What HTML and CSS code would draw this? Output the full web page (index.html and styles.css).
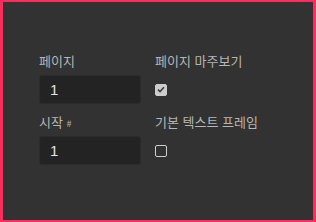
FILE: index.html
```html
<!DOCTYPE html>
<html lang="ko">
<head>
  <meta charset="UTF-8" />
  <title>페이지 설정</title>
  <link rel="stylesheet" href="styles.css">
</head>
<body>
  <div class="painel">
    <div class="grade">
      <div class="campo">
        <label class="rotulo">페이지</label>
        <div class="caixa">1</div>
      </div>
      <div class="campo">
        <label class="rotulo">페이지 마주보기</label>
        <div class="linha-check">
          <span class="check marcado">
            <svg width="8" height="7" viewBox="0 0 8 7"><path d="M1 3.6 L3 5.6 L7 1.2" fill="none" stroke="#3a3a3a" stroke-width="1.5"/></svg>
          </span>
        </div>
      </div>
      <div class="campo">
        <label class="rotulo">시작 <small>#</small></label>
        <div class="caixa">1</div>
      </div>
      <div class="campo">
        <label class="rotulo">기본 텍스트 프레임</label>
        <div class="linha-check">
          <span class="check"></span>
        </div>
      </div>
    </div>
  </div>
</body>
</html>
```

FILE: styles.css
```css
* {
  margin: 0;
  padding: 0;
  box-sizing: border-box;
}

html, body {
  width: 316px;
  height: 222px;
  overflow: hidden;
}

body {
  font-family: "Noto Sans CJK KR", "Noto Sans", sans-serif;
  background: #323232;
}

.painel {
  width: 316px;
  height: 222px;
  border: solid #fc2d5c;
  border-width: 2px 3px;
  background: #323232;
  padding: 51px 0 0 36px;
}

.grade {
  display: grid;
  grid-template-columns: 102px 140px;
  column-gap: 14px;
  row-gap: 10px;
}

.campo {
  display: flex;
  flex-direction: column;
  gap: 6px;
}

.rotulo {
  font-size: 13px;
  line-height: 16px;
  height: 16px;
  color: #b6b6b6;
  white-space: nowrap;
}

.rotulo small {
  font-size: 9px;
}

.caixa {
  height: 29px;
  background: #232323;
  border: 1px solid #2b2b2b;
  border-radius: 3px;
  padding-left: 10px;
  font-family: "Liberation Sans", sans-serif;
  font-size: 15px;
  line-height: 27px;
  color: #e4e4e4;
}

.linha-check {
  height: 29px;
  display: flex;
  align-items: center;
}

.check {
  width: 12px;
  height: 12px;
  border: 1.5px solid #cfcfcf;
  border-radius: 2px;
  display: flex;
  align-items: center;
  justify-content: center;
}

.check.marcado {
  background: #cdcdcd;
  border-color: #cdcdcd;
}
```
